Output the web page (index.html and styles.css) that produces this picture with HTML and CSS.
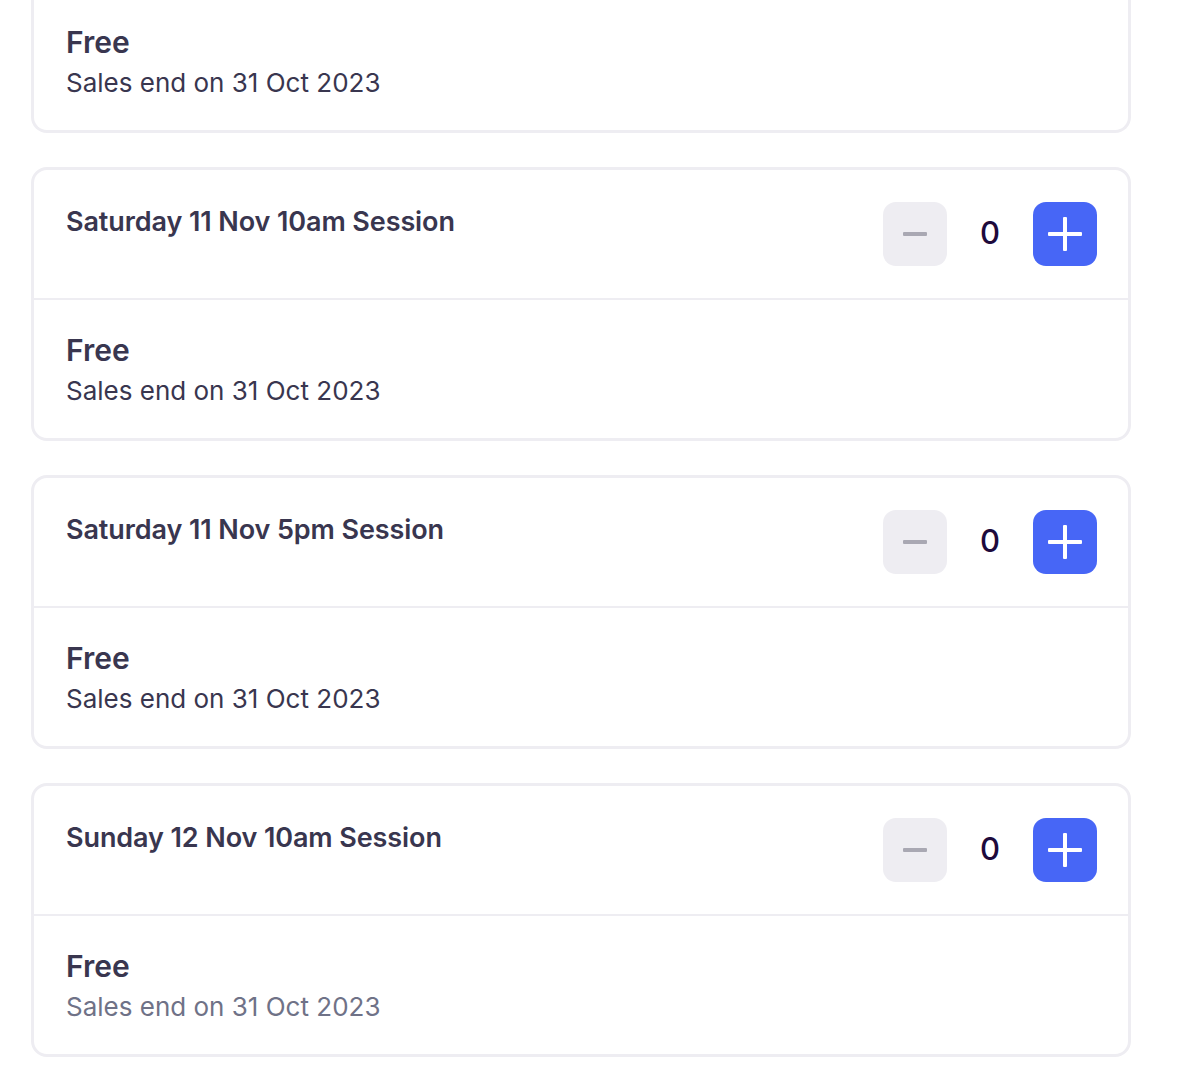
FILE: index.html
```html
<!DOCTYPE html>
<html lang="en">
<head>
    <meta charset="UTF-8">
    <meta name="viewport" content="width=device-width, initial-scale=1.0">
    <title>Tickets</title>
    <link rel="stylesheet" href="styles.css">
</head>
<body>

    <!-- Ticket list (scrolled, first card is only partly visible) -->
    <div class="ticket-list">

        <div class="ticket clipped">
            <div class="ticket-body">
                <p class="price">Free</p>
                <p class="sales-end">Sales end on 31 Oct 2023</p>
            </div>
        </div>

        <div class="ticket">
            <div class="ticket-header">
                <h3 class="ticket-name">Saturday 11 Nov 10am Session</h3>
                <div class="stepper">
                    <button class="step minus" aria-label="Remove ticket"><span class="bar"></span></button>
                    <span class="count">0</span>
                    <button class="step plus" aria-label="Add ticket"><span class="bar"></span><span class="bar vertical"></span></button>
                </div>
            </div>
            <div class="ticket-body">
                <p class="price">Free</p>
                <p class="sales-end">Sales end on 31 Oct 2023</p>
            </div>
        </div>

        <div class="ticket">
            <div class="ticket-header">
                <h3 class="ticket-name">Saturday 11 Nov 5pm Session</h3>
                <div class="stepper">
                    <button class="step minus" aria-label="Remove ticket"><span class="bar"></span></button>
                    <span class="count">0</span>
                    <button class="step plus" aria-label="Add ticket"><span class="bar"></span><span class="bar vertical"></span></button>
                </div>
            </div>
            <div class="ticket-body">
                <p class="price">Free</p>
                <p class="sales-end">Sales end on 31 Oct 2023</p>
            </div>
        </div>

        <div class="ticket">
            <div class="ticket-header">
                <h3 class="ticket-name">Sunday 12 Nov 10am Session</h3>
                <div class="stepper">
                    <button class="step minus" aria-label="Remove ticket"><span class="bar"></span></button>
                    <span class="count">0</span>
                    <button class="step plus" aria-label="Add ticket"><span class="bar"></span><span class="bar vertical"></span></button>
                </div>
            </div>
            <div class="ticket-body">
                <p class="price">Free</p>
                <p class="sales-end faded">Sales end on 31 Oct 2023</p>
            </div>
        </div>

    </div>

</body>
</html>
```

FILE: styles.css
```css
/* Reset margins and padding */
* {
    margin: 0;
    padding: 0;
    box-sizing: border-box;
}

body {
    font-family: Inter, "Noto Sans", Arial, sans-serif;
    background-color: #fff;
    color: #39364f;
    height: 100vh;
    overflow: hidden;
}

/* List of ticket cards */
.ticket-list {
    display: flex;
    flex-direction: column;
    gap: 34px;
    width: 1100px;
    margin-left: 31px;
}

.ticket {
    border: 3px solid #eeedf2;
    border-radius: 16px;
    background-color: #fff;
}

/* First card is scrolled past the top of the page */
.ticket.clipped {
    border-top: none;
    border-top-left-radius: 0;
    border-top-right-radius: 0;
    margin-top: -8px;
}

/* Header: name on the left, quantity stepper on the right */
.ticket-header {
    display: flex;
    justify-content: space-between;
    align-items: flex-start;
    padding: 32px 31px 32px 32px;
    border-bottom: 2px solid #eeedf2;
}

.ticket-name {
    font-size: 27px;
    font-weight: 600;
    line-height: 40px;
    letter-spacing: -0.1px;
    color: #39364f;
}

.stepper {
    display: flex;
    align-items: center;
}

.step {
    width: 64px;
    height: 64px;
    border: none;
    border-radius: 13px;
    display: flex;
    align-items: center;
    justify-content: center;
    position: relative;
    cursor: pointer;
}

.step.minus {
    background-color: #eeedf2;
}

.step.plus {
    background-color: #4766f6;
}

.step .bar {
    display: block;
    height: 4px;
    border-radius: 1px;
}

.step.minus .bar {
    width: 24px;
    background-color: #a9a8b3;
}

.step.plus .bar {
    width: 34px;
    background-color: #fff;
}

/* vertical stroke of the plus sits over the horizontal one */
.step.plus .bar.vertical {
    position: absolute;
    width: 4px;
    height: 34px;
}

.count {
    width: 86px;
    padding-bottom: 4px;
    text-align: center;
    font-size: 31px;
    font-weight: 500;
    color: #1e0a3c;
}

/* Body: price and sales end date */
.ticket-body {
    padding: 32px 32px 28px;
}

.price {
    font-size: 30px;
    font-weight: 600;
    line-height: 36px;
    color: #39364f;
}

.sales-end {
    margin-top: 4px;
    font-size: 26px;
    line-height: 38px;
    color: #39364f;
}

.sales-end.faded {
    color: #6f7287;
}
```
